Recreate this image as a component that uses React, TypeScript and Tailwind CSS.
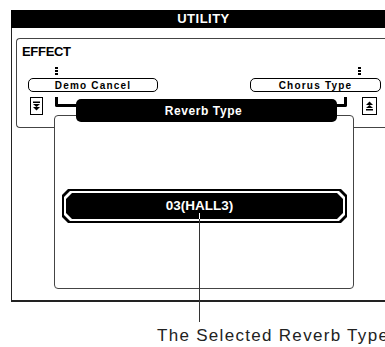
const oct =
  '[clip-path:polygon(6px_0,calc(100%-6px)_0,100%_6px,100%_calc(100%-6px),calc(100%-6px)_100%,6px_100%,0_calc(100%-6px),0_6px)]';

function Mark() {
  return (
    <div className="flex w-[3px] flex-col gap-[1px]">
      <div className="h-[2px] bg-black" />
      <div className="h-[2px] bg-black" />
      <div className="h-[2px] bg-black" />
    </div>
  );
}

function SoftKey({ label, className }: { label: string; className: string }) {
  return (
    <div
      className={`flex h-[14px] items-center justify-center rounded-[5px] border border-black text-[10px] font-bold tracking-[1.2px] ${className}`}
    >
      {label}
    </div>
  );
}

function ArrowKey({ up, className }: { up?: boolean; className: string }) {
  return (
    <div className={`flex h-[18px] items-center justify-center border border-black ${className}`}>
      <svg width="9" height="10" viewBox="0 0 9 10" className={up ? 'rotate-180' : ''}>
        <rect x="1" y="0.5" width="7" height="1.5" fill="black" />
        <path d="M1 3h7L4.5 6z" fill="black" />
        <path d="M1 6h7L4.5 9.5z" fill="black" />
      </svg>
    </div>
  );
}

export default function App() {
  return (
    <div className="h-[347px] w-[385px] overflow-hidden bg-white pt-[10px] font-['Liberation_Sans',Arial,sans-serif] text-black">
      {/* title bar */}
      <div className="ml-[11px] flex h-[18px] w-[385px] items-center justify-center bg-black text-[13px] font-bold tracking-[0.5px] text-white">
        UTILITY
      </div>

      {/* LCD frame */}
      <div className="relative ml-[11px] h-[274px] w-[385px] border-b-2 border-l border-[#222] pt-[10px]">
        <div className="ml-[4px] h-[90px] w-[380px] rounded-l-[4px] border border-r-0 border-[#444]">
          <div className="ml-[5px] mt-[5px] text-[13px] leading-[15px] font-bold tracking-[-0.3px]">EFFECT</div>
          <div className="mt-[8px] flex h-[8px]">
            <div className="ml-[38px]">
              <Mark />
            </div>
            <div className="ml-[300px]">
              <Mark />
            </div>
          </div>
          <div className="mt-[3px] flex">
            <SoftKey label="Demo Cancel" className="ml-[11px] w-[130px]" />
            <SoftKey label="Chorus Type" className="ml-[92px] w-[131px]" />
          </div>
          <div className="mt-[5px] flex">
            <ArrowKey className="ml-[13px] w-[13px]" />
            <ArrowKey up className="ml-[319px] w-[15px]" />
          </div>
        </div>

        {/* Reverb Type window */}
        <div className="absolute left-[42px] top-[87px] h-[174px] w-[300px] rounded-[4px] border border-[#444] bg-white" />
        <div className="absolute left-[43px] top-[69px] h-[10px] w-[22px] rounded-bl-[2px] border-b-[3px] border-l-[3px] border-black" />
        <div className="absolute left-[323px] top-[69px] h-[10px] w-[12px] rounded-br-[2px] border-b-[3px] border-r-[3px] border-black" />
        <div className="absolute left-[64px] top-[71px] flex h-[23px] w-[261px] items-center justify-center rounded-[5px] bg-black pr-[6px] text-[12px] font-bold tracking-[0.6px] text-white">
          Reverb Type
        </div>

        {/* value box */}
        <div className={`absolute left-[50px] top-[161px] h-[34px] w-[285px] bg-black p-[2px] ${oct}`}>
          <div className={`h-full w-full bg-white p-[2px] ${oct}`}>
            <div
              className={`flex h-full w-full items-center justify-center bg-black pr-[10px] text-[13.5px] font-bold text-white ${oct}`}
            >
              03(HALL3)
            </div>
          </div>
        </div>

        {/* callout */}
        <div className="absolute left-[187px] top-[185px] h-[6px] w-px bg-white" />
        <div className="absolute left-[187px] top-[191px] h-[103px] w-px bg-[#333]" />
      </div>

      <div className="ml-[157px] mt-[24px] whitespace-nowrap text-[17px] leading-[20px] tracking-[1.3px] text-[#222]">
        The Selected Reverb Type
      </div>
    </div>
  );
}
